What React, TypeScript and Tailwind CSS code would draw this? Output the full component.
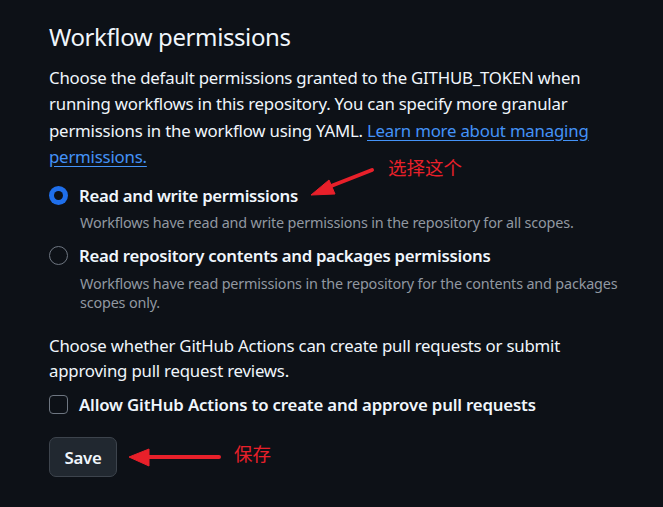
import React from "react";

export default function App() {
  return (
    <div
      className="relative w-[663px] h-[507px] overflow-hidden bg-[#0d1117] pl-[49px] pt-[19px] text-[#f0f6fc]"
      style={{ fontFamily: '"Noto Sans", "Noto Sans CJK SC", sans-serif' }}
    >
      <h2 className="text-[24px] leading-[36px] font-normal tracking-[-0.4px]">Workflow permissions</h2>
      <p className="mt-[10px] text-[16.8px] leading-[26.4px] tracking-[-0.2px]">
        Choose the default permissions granted to the GITHUB_TOKEN when
        <br />
        running workflows in this repository. You can specify more granular
        <br />
        permissions in the workflow using YAML.{" "}
        <a className="text-[#4493f8] underline underline-offset-[3px]" href="#">
          Learn more about managing
          <br />
          permissions.
        </a>
      </p>

      <div className="mt-[12px] flex flex-col">
        <label className="flex items-center gap-[11px]">
          <span className="flex h-[19px] w-[19px] items-center justify-center rounded-full bg-[#1f6feb]">
            <span className="h-[9px] w-[9px] rounded-full bg-[#0d1117]" />
          </span>
          <span className="text-[16.8px] leading-[26px] font-semibold tracking-[-0.3px]">
            Read and write permissions
          </span>
        </label>
        <p className="mt-[4px] pl-[31px] text-[14.4px] leading-[20px] tracking-[-0.17px] text-[#9198a1]">
          Workflows have read and write permissions in the repository for all scopes.
        </p>

        <label className="mt-[10px] flex items-center gap-[11px]">
          <span className="h-[19px] w-[19px] rounded-full border border-[#6e7681]" />
          <span className="text-[16.8px] leading-[26px] font-semibold tracking-[-0.3px]">
            Read repository contents and packages permissions
          </span>
        </label>
        <p className="mt-[5px] pl-[31px] text-[14.4px] leading-[19.5px] tracking-[-0.17px] text-[#9198a1]">
          Workflows have read permissions in the repository for the contents and packages
          <br />
          scopes only.
        </p>
      </div>

      <p className="mt-[20px] text-[16.8px] leading-[25px] tracking-[-0.2px]">
        Choose whether GitHub Actions can create pull requests or submit
        <br />
        approving pull request reviews.
      </p>

      <label className="mt-[9px] flex items-center gap-[11px]">
        <span className="h-[19px] w-[19px] rounded-[4px] border border-[#6e7681]" />
        <span className="text-[16.8px] leading-[26px] font-semibold tracking-[-0.17px]">
          Allow GitHub Actions to create and approve pull requests
        </span>
      </label>

      <button className="mt-[19px] flex h-[40px] w-[68px] items-center justify-center rounded-[7px] border border-[#3d444d] bg-[#212830] pt-[2px] text-[16.8px] font-semibold tracking-[-0.3px] text-[#f0f6fc]">
        Save
      </button>

      <svg className="pointer-events-none absolute left-0 top-0" width="663" height="507">
        <g fill="#e8202a" stroke="#e8202a">
          <line x1="372" y1="170" x2="326" y2="188" strokeWidth="4" strokeLinecap="round" />
          <polygon points="311,195 329,180 335,194" strokeWidth="1" />
          <line x1="219" y1="457" x2="145" y2="457" strokeWidth="4" strokeLinecap="round" />
          <polygon points="129,457 149,449 149,466" strokeWidth="1" />
        </g>
      </svg>
      <span className="absolute left-[388px] top-[156px] text-[18.5px] leading-[24px] text-[#e8202a]">
        选择这个
      </span>
      <span className="absolute left-[234px] top-[442px] text-[18.5px] leading-[24px] text-[#e8202a]">
        保存
      </span>
    </div>
  );
}
